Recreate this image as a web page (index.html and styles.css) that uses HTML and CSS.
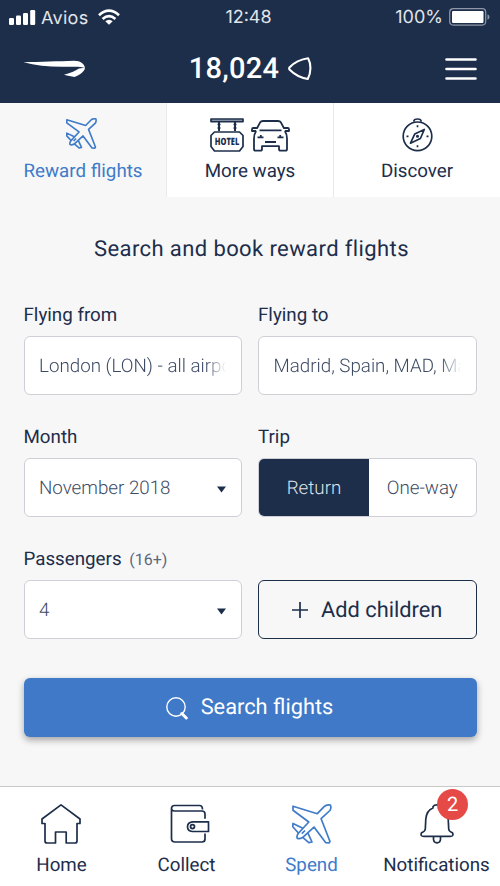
FILE: index.html
```html
<!DOCTYPE html>
<html lang="en">
<head>
<meta charset="utf-8">
<meta name="viewport" content="width=device-width, initial-scale=1">
<title>Reward flights</title>
<link rel="stylesheet" href="styles.css">
</head>
<body>
<svg class="defs" aria-hidden="true">
  <symbol id="plane" viewBox="0 0 40 40">
    <path d="M1 2.2 25.3 9.7 32.6 2.2Q35 .7 38.4 1 39.6 3.8 37.9 6.5L29.1 14.7 38 37.5 37 39 33.6 38.6 22 23.1 10.5 33.6Q7.5 35.4 5.2 34.3 4.4 32.2 6.2 29.5L16.8 18 1 6.2Z"/>
    <path d="M10.8 24.2 1 19.5.8 22.7 6.4 29M15.8 28.8 20 38 16.8 38.6 10.7 33.4M9.8 29.7 13 26.5"/>
  </symbol>
</svg>
<div class="app">
  <header class="header">
    <div class="status">
      <div class="carrier">
        <svg width="27" height="17" viewBox="0 0 27 17" fill="#fff"><rect y="9" width="5" height="7" rx="1.2"/><rect x="7" y="6.5" width="5" height="9.5" rx="1.2"/><rect x="14" y="4" width="5" height="12" rx="1.2"/><rect x="21.2" y="1" width="5" height="15" rx="1.2"/></svg>
        <span class="carrier-name">Avios</span>
        <svg width="22" height="17" viewBox="0 0 22 17" fill="none" stroke="#fff" stroke-width="2.7"><path d="M1 6.2Q11-2.8 21 6.2M4.6 10Q11 4.2 17.4 10"/><path d="M11 15.8 7.3 12.2Q11 9.2 14.7 12.2Z" fill="#fff" stroke="none"/></svg>
      </div>
      <span class="clock">12:48</span>
      <div class="power">
        <span>100%</span>
        <svg width="41" height="18" viewBox="0 0 41 18"><rect x=".7" y=".7" width="36" height="16.4" rx="3.5" fill="none" stroke="#8f97a6" stroke-width="1.2"/><rect x="3" y="3" width="31.5" height="12" rx="1.2" fill="#fff"/><path d="M38.5 6.3Q40.5 7 40.5 9t-2 2.7Z" fill="#8f97a6"/></svg>
      </div>
    </div>
    <div class="topbar">
      <svg class="brand" width="64" height="18" viewBox="0 0 64 18" fill="#fff"><path d="M.5 2.2C17 1.7 36 1.2 51 .7 58 .7 61.5 4 62 8 58 6.2 51 6.8 39 6.8 25 6.8 12 5.5.5 2.2Z"/><path d="M62 8.3C61 12 56 15.5 51.5 17 48 16.2 45 16 41 14.8 48 13 53 10.5 56 8.6 59 7.6 61 7.8 62 8.3Z"/></svg>
      <div class="balance"><span>18,024</span><svg width="24" height="24" viewBox="0 0 24 24" fill="none" stroke="#fff" stroke-width="2.1" stroke-linejoin="round"><path d="M20.1 1.2C13 2 5.5 6.3 1.7 10.2Q.6 11.6 1.7 12.7C6.5 17.5 13 20.8 19.8 22Q22.3 17.5 22.4 11.5T20.1 1.2Z"/></svg></div>
      <svg class="menu" width="32" height="24" viewBox="0 0 32 24" stroke="#fff" stroke-width="2.6" stroke-linecap="round"><path d="M1.5 2.5h29M1.5 12h29M1.5 21.5h29"/></svg>
    </div>
  </header>

  <nav class="tabs">
    <a class="tab tab-active"><span class="tab-icons plane-icon"><svg class="line" width="31" height="31" viewBox="0 0 40 40" stroke-width="2.1"><use href="#plane"/></svg></span><span>Reward flights</span></a>
    <a class="tab"><span class="tab-icons more-icons">
      <svg class="line" width="34" height="34" viewBox="0 0 34 34" stroke-width="1.7"><path d="M1 1h32v2.6H1Z" fill="#a9b0bd"/><path d="M9 4v9M25 4v9" stroke-width="2"/><path d="M7.5 6.5h3M7.5 10h3M23.5 6.5h3M23.5 10h3" stroke-width="1.3"/><path d="M4.5 14h25L33 17.5v11L29.5 33h-25L1 28.5v-11Z"/><text class="sign" x="4.8" y="27" textLength="24.5" lengthAdjust="spacingAndGlyphs">HOTEL</text></svg>
      <svg class="line" width="39" height="32" viewBox="0 0 39 32" stroke-width="1.8"><path d="M6 8.2 9 2.6Q10 1 12 1h15q2 0 3 1.6L33 8.2M6.5 8H2.3Q1 8 1 9.4V11h4.2M32.5 8h4.2Q38 8 38 9.4V11h-4.2M8.5 10.3h22M5.2 11Q3 14 3 18.5V29q0 1.7 1.5 1.7h5Q11 30.7 11 29v-2.8h17V29q0 1.7 1.5 1.7h5Q36 30.7 36 29V18.5Q36 14 33.8 11M6.5 17.3h6M26.5 17.3h6M14 22h11"/><path d="M9.8 15v3M29.2 15v3"/></svg>
    </span><span>More ways</span></a>
    <a class="tab"><span class="tab-icons"><svg class="line" width="31" height="34" viewBox="0 0 31 34" stroke-width="1.7"><circle cx="15.5" cy="18.3" r="14.3"/><path d="M12 3.8V2.5Q12.5 1 15.5 1T19 2.5v1.3M15.5 7.3v2M15.5 27.3v2M4.5 18.3h2M24.5 18.3h2M22.3 11.5 18.4 20.5 8.5 25.2 12.7 16.1Z"/><circle cx="15.5" cy="18.3" r=".7"/></svg></span><span>Discover</span></a>
  </nav>

  <main class="content">
    <h1 class="title">Search and book reward flights</h1>
    <form class="form">
      <div class="field"><label class="label">Flying from</label><div class="control"><span class="value fade">London (LON) - all airports</span></div></div>
      <div class="field"><label class="label">Flying to</label><div class="control"><span class="value fade">Madrid, Spain, MAD, Madrid</span></div></div>
      <div class="field"><label class="label">Month</label><div class="control"><span class="value">November 2018</span><svg width="9" height="7" viewBox="0 0 9 7" fill="#1d2e4b"><path d="M0 .4h9L4.5 6.6Z"/></svg></div></div>
      <div class="field"><label class="label">Trip</label><div class="control toggle"><span class="option option-on">Return</span><span class="option">One-way</span></div></div>
      <div class="field"><label class="label">Passengers <small class="hint">(16+)</small></label><div class="control"><span class="value">4</span><svg width="9" height="7" viewBox="0 0 9 7" fill="#1d2e4b"><path d="M0 .4h9L4.5 6.6Z"/></svg></div></div>
      <div class="field field-end"><button type="button" class="add"><svg class="line" width="16" height="16" viewBox="0 0 16 16" stroke-width="1.7"><path d="M8 0v16M0 8h16"/></svg><span>Add children</span></button></div>
    </form>
    <button type="button" class="search"><svg width="22" height="23" viewBox="0 0 22 23" fill="none" stroke="#fff" stroke-width="1.4"><circle cx="10" cy="10" r="9.2"/><path d="M15.8 16.5 20.3 21" stroke-width="3" stroke-linecap="round"/></svg><span>Search flights</span></button>
  </main>

  <nav class="bottom">
    <a class="item item-home"><svg class="line" width="40" height="40" viewBox="0 0 40 40" stroke-width="1.7"><path d="M20 .9 1 15v4.5h3V37q0 2 2 2h8.5V28h10.7v11H34q2 0 2-2V19.5h3V15Z"/></svg><span>Home</span></a>
    <a class="item item-collect"><svg class="line" width="40" height="40" viewBox="0 0 40 40" stroke-width="1.7"><path d="M32.5 5.5Q32.5 1.5 29.5 1.5H4.5Q1.5 1.5 1.5 4.5V34.5Q1.5 38 5 38H32Q35 38 35 35V29.5M35 14.8V10Q35 7 32 7H4.5Q1.5 7 1.5 4.5M38.5 17.8H22.3Q17.5 18.5 17.5 22.7T22.3 27.5H38.5Z"/><circle cx="22.5" cy="22.6" r="2"/></svg><span>Collect</span></a>
    <a class="item item-active"><svg class="line" width="40" height="40" viewBox="0 0 40 40" stroke-width="1.7"><use href="#plane"/></svg><span>Spend</span></a>
    <a class="item"><span class="bell"><svg class="line" width="34" height="40" viewBox="0 0 34 40" stroke-width="1.7"><path d="M13 4V2.7Q14 .9 17 .9T21 2.7V4Q28 6.5 28.2 15L28.7 25Q29 27.5 32 28.5 33.4 29.5 32.7 31.5 32.3 32.4 30 32.4H4Q1.7 32.4 1.3 31.5.6 29.5 2 28.5 5 27.5 5.3 25L5.8 15Q6.5 6.5 13 4ZM13.5 33v2.5Q13.8 38.8 17 38.8T20.5 35.5V33"/></svg><b class="badge">2</b></span><span>Notifications</span></a>
  </nav>
</div>
</body>
</html>
```

FILE: styles.css
```css
* { box-sizing: border-box; }
body {
  margin: 0;
  background: #f7f7f7;
  color: #1d2e4b;
  font-family: Roboto, "Liberation Sans", sans-serif;
  font-size: 18.75px;
  text-rendering: geometricPrecision;
}
svg { display: block; flex: none; }
.defs { width: 0; height: 0; position: absolute; }
.app { width: 500px; height: 886px; display: flex; flex-direction: column; overflow: hidden; }
.line { fill: none; stroke: currentColor; stroke-linejoin: round; }

.header { height: 103px; background: #1d2e4b; color: #fff; }
.status {
  height: 34px;
  padding: 0 9px;
  display: grid;
  grid-template-columns: 1fr auto 1fr;
  align-items: center;
  color: #e2e5ea;
  font-family: Inter, sans-serif;
  font-size: 18px;
  line-height: 34px;
}
.carrier { display: flex; align-items: center; height: 30px; }
.carrier-name { margin: 3px 10px 0 5px; letter-spacing: .3px; }
.clock { padding-top: 1px; margin-left: -3px; }
.power { display: flex; align-items: center; justify-content: flex-end; gap: 6px; padding-top: 1px; margin-right: 1px; }
.power svg { margin-top: -3px; }
.topbar { height: 69px; padding: 0 23px; display: grid; grid-template-columns: 1fr auto 1fr; align-items: center; }
.brand { margin-top: 1px; }
.balance { display: flex; align-items: center; gap: 9px; font-size: 29px; font-weight: 500; padding-left: 1px; letter-spacing: .3px; }
.menu { justify-self: end; }

.tabs { height: 94px; display: grid; grid-template-columns: 166px 167px 167px; background: #fff; }
.tab { display: flex; flex-direction: column; align-items: center; padding-top: 14px; line-height: 24px; }
.tab + .tab { border-left: 1px solid #e9e9ed; }
.tab-active { background: #f7f7f7; color: #3f7bc9; }
.tab-icons { height: 42px; display: flex; padding-top: 1px; }
.plane-icon { margin-right: 4px; }
.more-icons { gap: 7px; }
.more-icons svg:last-child { margin-top: 2px; }
.sign { font-family: "Open Sans", sans-serif; font-size: 10px; font-weight: 800; fill: currentColor; stroke: none; }

.content { flex: 1; padding: 0 23.5px; }
.title { margin: 38px 0 0; padding-left: 3px; text-align: center; font-size: 22px; font-weight: 400; line-height: 30px; letter-spacing: .4px; }
.form { margin-top: 32px; display: grid; grid-template-columns: 1fr 1fr; gap: 24px 16px; }
.field { height: 98px; display: flex; flex-direction: column; min-width: 0; }
.field-end { justify-content: flex-end; }
.label { height: 39px; padding-top: 5px; line-height: 26px; }
.hint { font-size: 16px; margin-left: 3px; color: #5c687d; }
.control {
  height: 59px;
  padding: 0 15px 0 14.5px;
  display: flex;
  align-items: center;
  justify-content: space-between;
  border: 1.5px solid #cfd0d6;
  border-radius: 6px;
  background: #fff;
  color: #3d4b64;
  font-weight: 300;
}
.control svg { margin-top: 3px; }
.fade { flex: 1; overflow: hidden; white-space: nowrap; -webkit-mask-image: linear-gradient(90deg, #000 89%, transparent); mask-image: linear-gradient(90deg, #000 89%, transparent); }
.toggle { padding: 0; overflow: hidden; }
.option { height: 100%; flex: 1; display: flex; align-items: center; justify-content: center; }
.option-on { flex: 0 0 110px; background: #1d2e4b; color: #dfe2e8; }
button { font: inherit; cursor: pointer; display: flex; align-items: center; justify-content: center; text-rendering: inherit; }
.add { height: 59px; width: 100%; gap: 13px; padding: 0; border: 1.5px solid #1d2e4b; border-radius: 6px; background: transparent; color: #1d2e4b; font-size: 21.8px; }
.add span { padding-top: 1px; }
.search { width: 100%; height: 59px; margin-top: 39px; gap: 13px; padding: 0 1px 1px 0; border: 0; border-radius: 6px; background: #3f79c8; color: #fff; font-size: 21.8px; box-shadow: 0 3px 7px rgba(0, 0, 0, .35); }
.search svg { margin-top: 2px; }

.bottom { height: 100px; display: grid; grid-template-columns: 123px 127px 123px 1fr; border-top: 1px solid #c8c8c8; background: #fff; }
.item { display: flex; flex-direction: column; align-items: center; gap: 9px; padding-top: 17px; line-height: 24px; }
.item-home svg { margin-right: 2px; }
.item-collect svg { margin-left: 6px; }
.item-active { color: #3f7bc9; }
.item-active svg { margin-left: 1px; }
.bell { position: relative; margin-left: 1px; }
.badge { position: absolute; left: 17px; top: -15px; width: 31px; height: 31px; border-radius: 50%; background: #e64a47; color: #fff; font-size: 20px; font-weight: 400; line-height: 30px; text-align: center; }
```
